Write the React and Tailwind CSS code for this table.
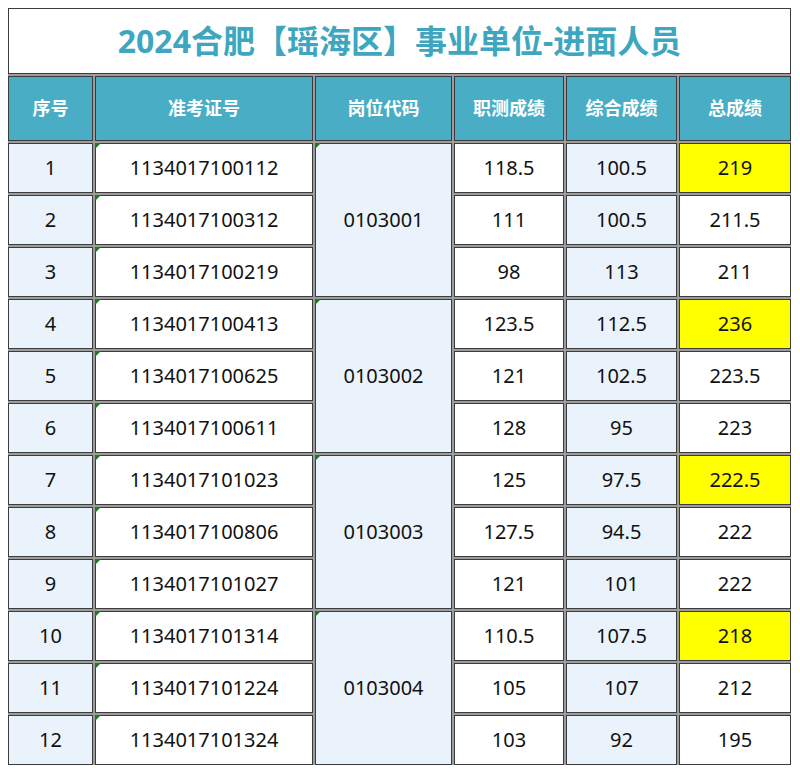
import React from 'react';

const rows = [
  ['1', '1134017100112', '118.5', '100.5', '219', true],
  ['2', '1134017100312', '111', '100.5', '211.5', false],
  ['3', '1134017100219', '98', '113', '211', false],
  ['4', '1134017100413', '123.5', '112.5', '236', true],
  ['5', '1134017100625', '121', '102.5', '223.5', false],
  ['6', '1134017100611', '128', '95', '223', false],
  ['7', '1134017101023', '125', '97.5', '222.5', true],
  ['8', '1134017100806', '127.5', '94.5', '222', false],
  ['9', '1134017101027', '121', '101', '222', false],
  ['10', '1134017101314', '110.5', '107.5', '218', true],
  ['11', '1134017101224', '105', '107', '212', false],
  ['12', '1134017101324', '103', '92', '195', false],
];

const codes = ['0103001', '0103002', '0103003', '0103004'];
const headers = ['序号', '准考证号', '岗位代码', '职测成绩', '综合成绩', '总成绩'];

const cell = 'border border-[#3c3c3c] flex items-center justify-center';

// little green Excel error marker in the top-left corner
function Mark() {
  return (
    <span className="absolute -left-px -top-px w-0 h-0 border-t-[6px] border-r-[6px] border-t-[#1f7a1f] border-r-transparent" />
  );
}

export default function App() {
  return (
    <div
      className="w-[800px] h-[776px] bg-white pt-2 pl-2"
      style={{ fontFamily: '"Noto Sans", "Noto Sans CJK SC", sans-serif' }}
    >
      <div className="w-[783px] flex flex-col gap-[2px] bg-[#9c9c9c]">
        <div className="h-[66px] bg-white border border-[#3c3c3c] flex items-center justify-center">
          <h1 className="text-[32px] font-bold text-[#3ea7bf]">
            2024合肥【瑶海区】事业单位-进面人员
          </h1>
        </div>
        <div className="grid grid-cols-[85px_218px_137px_110px_111px_112px] grid-rows-[65px] auto-rows-[50px] gap-[2px] text-[20px] text-[#111]">
          {headers.map((h) => (
            <div key={h} className={`${cell} bg-[#48adc5] text-white font-bold text-[18px]`}>
              {h}
            </div>
          ))}
          {rows.map(([no, id, a, b, total, hi], i) => (
            <React.Fragment key={no}>
              <div className={`${cell} bg-[#eaf3fb] col-start-1`}>{no}</div>
              <div className={`${cell} bg-white col-start-2 relative`}>
                <Mark />
                {id}
              </div>
              {i % 3 === 0 && (
                <div className={`${cell} bg-[#eaf3fb] col-start-3 row-span-3 relative`}>
                  <Mark />
                  {codes[i / 3]}
                </div>
              )}
              <div className={`${cell} bg-white col-start-4`}>{a}</div>
              <div className={`${cell} bg-[#eaf3fb] col-start-5`}>{b}</div>
              <div className={`${cell} col-start-6 ${hi ? 'bg-[#ffff00]' : 'bg-white'}`}>{total}</div>
            </React.Fragment>
          ))}
        </div>
      </div>
    </div>
  );
}
